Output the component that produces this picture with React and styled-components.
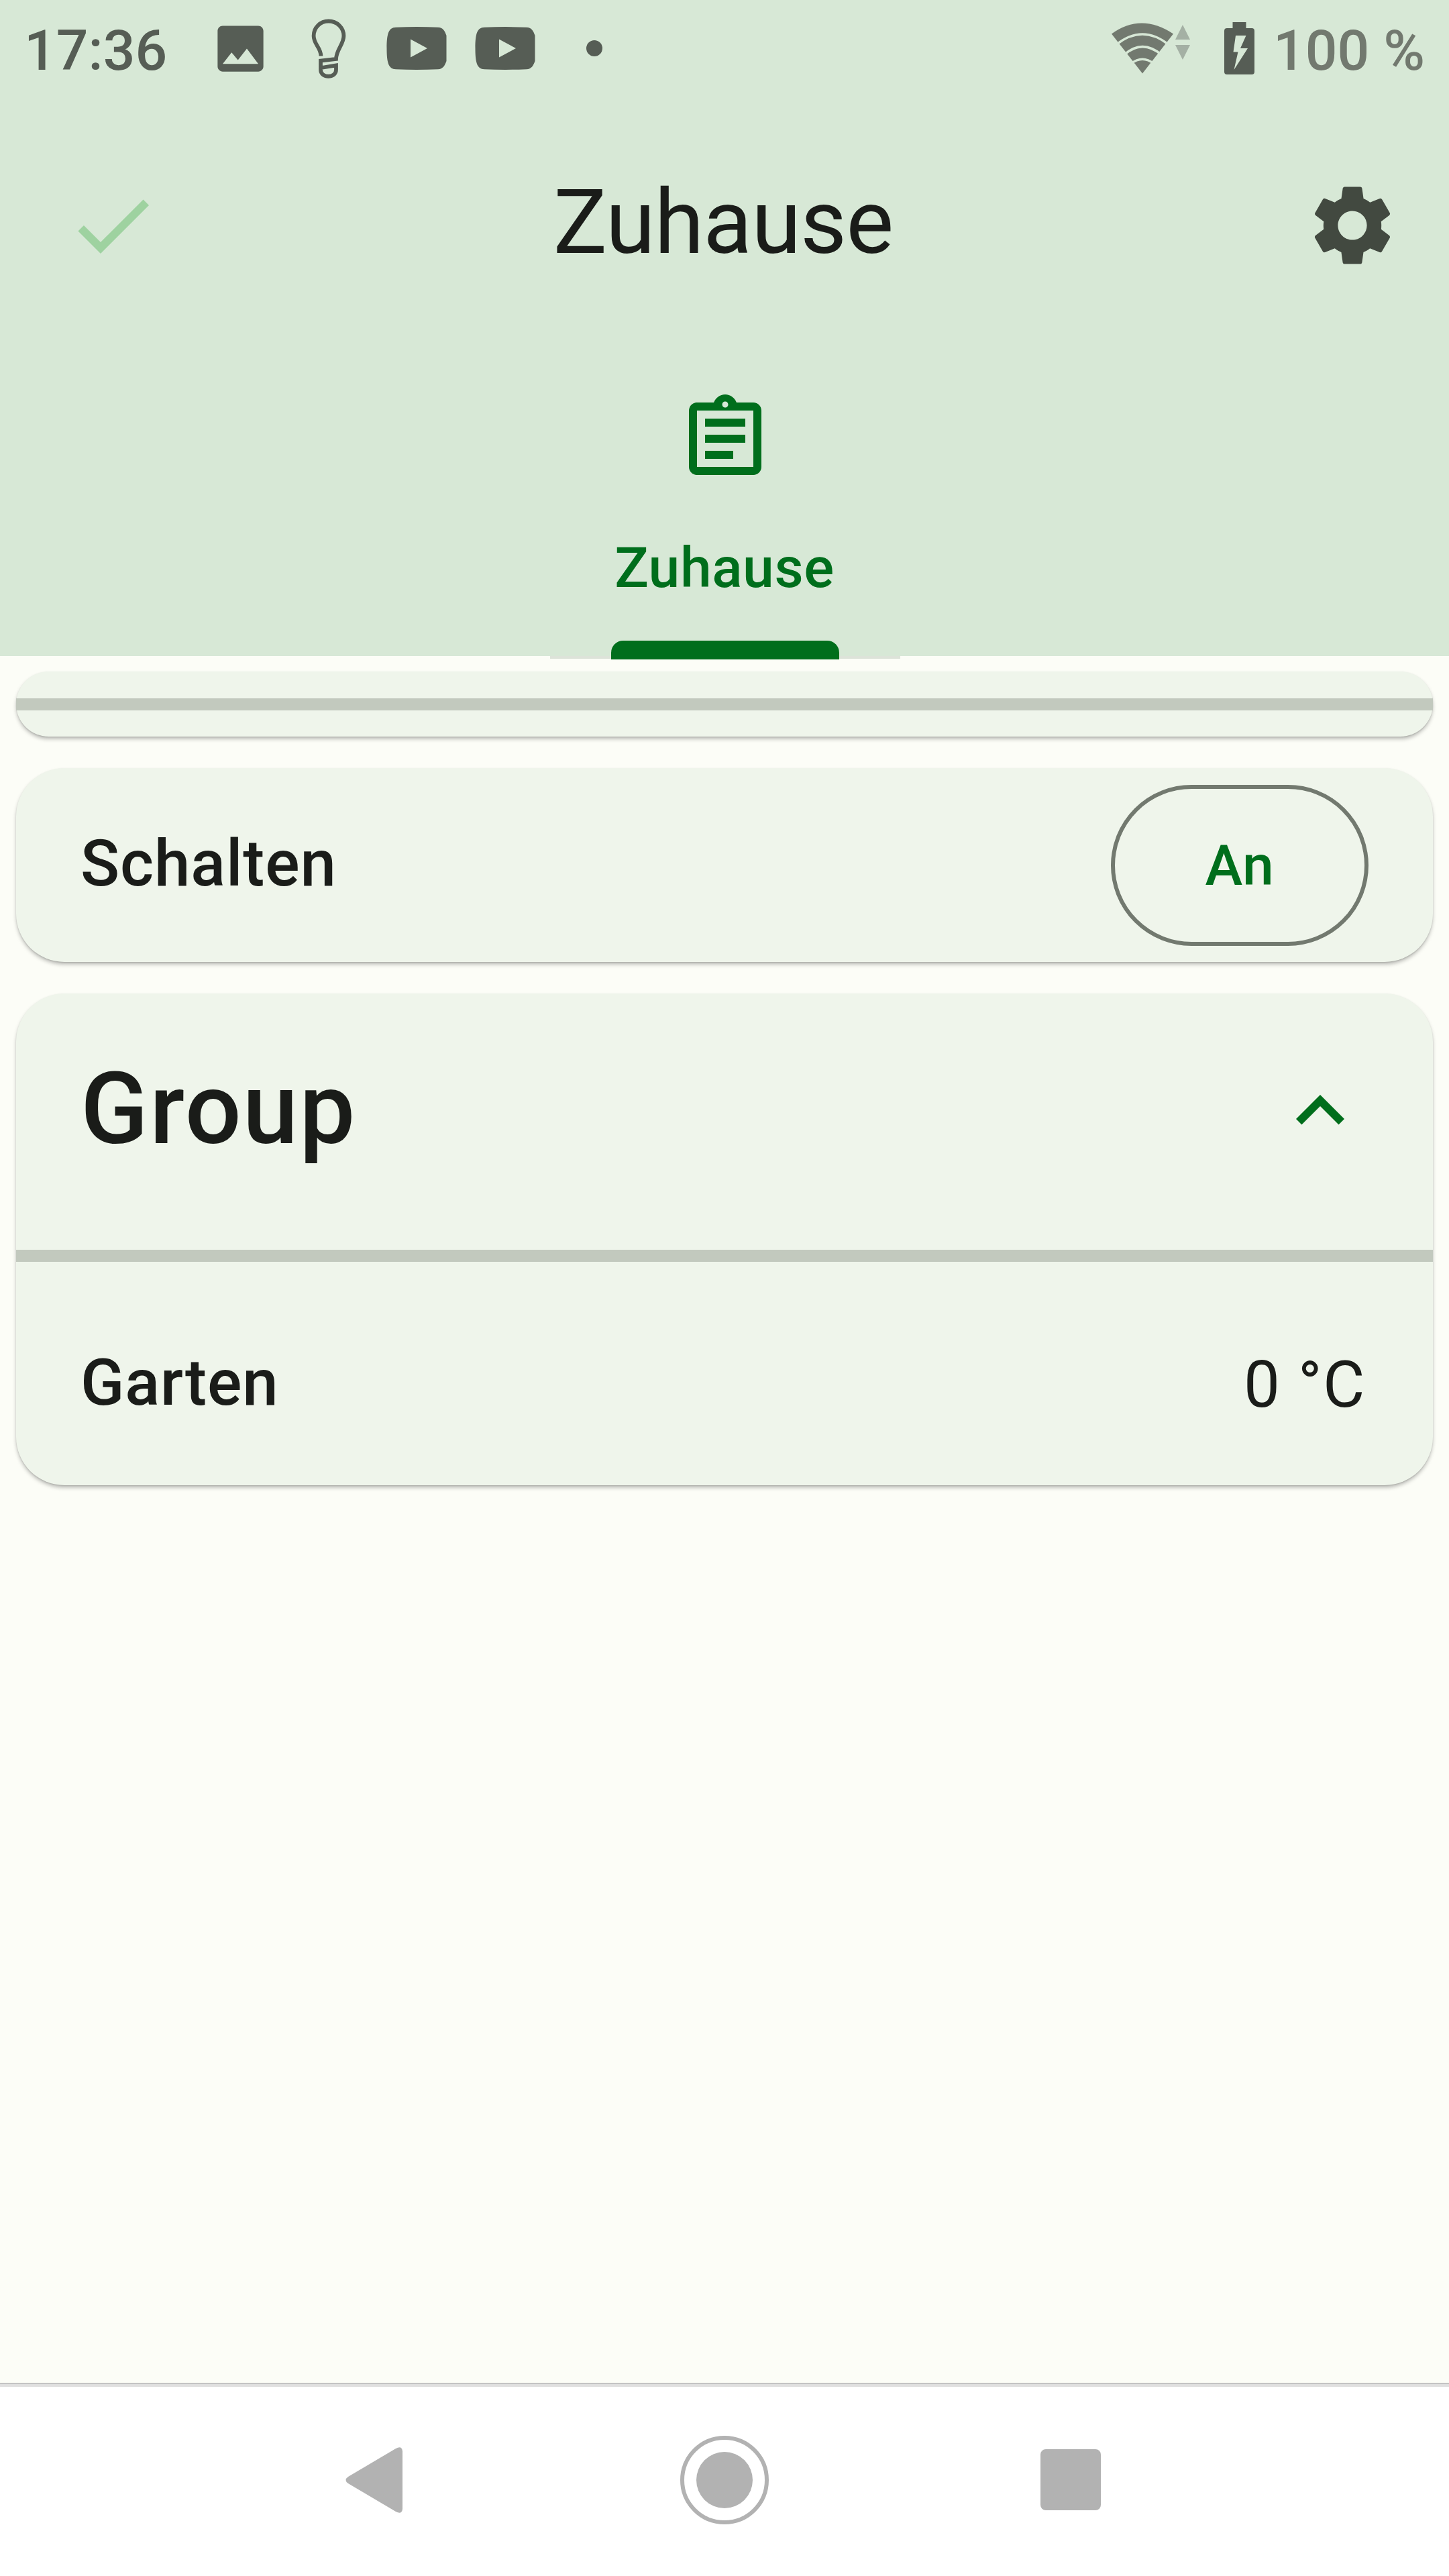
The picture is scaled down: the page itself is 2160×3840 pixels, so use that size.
import React from "react";
import styled, { createGlobalStyle } from "styled-components";
import {
  MdCheck,
  MdSettings,
  MdOutlineAssignment,
  MdExpandLess,
  MdImage,
} from "react-icons/md";

const color = {
  header: "#d7e8d6",
  background: "#fcfdf7",
  card: "#eff5eb",
  divider: "#c2c9be",
  outline: "#72796f",
  text: "#1a1c19",
  muted: "#424940",
  primary: "#006e1c",
  status: "#565d55",
  nav: "#b2b2b2",
};

const GlobalStyle = createGlobalStyle`
  html, body { margin: 0; padding: 0; background: ${color.background}; }
  *, *::before, *::after { box-sizing: border-box; }
  svg { display: block; flex: none; }
`;

const Screen = styled.div`
  display: flex;
  flex-direction: column;
  width: 2160px;
  height: 3840px;
  overflow: hidden;
  background: ${color.background};
  color: ${color.text};
  font-family: Roboto, "Noto Sans", sans-serif;
`;

const Header = styled.header`
  flex: none;
  height: 978px;
  background: ${color.header};
`;

const StatusBar = styled.div`
  display: flex;
  align-items: center;
  justify-content: space-between;
  height: 144px;
  padding: 0 36px;
  color: ${color.status};
`;

const StatusGroup = styled.div`
  display: flex;
  align-items: center;
  height: 144px;
`;

const StatusText = styled.span`
  font-size: 84px;
  font-weight: 500;
  line-height: 100px;
  padding-top: 7px;
  white-space: nowrap;
  width: ${(p) => p.$width}px;
  color: ${(p) => p.$color || color.status};
`;

const StatusSlot = styled.span`
  display: flex;
  align-items: center;
  justify-content: center;
  width: ${(p) => p.$width}px;
  height: 144px;
`;

const BatterySlot = styled.span`
  display: flex;
  padding: 0 28px 0 50px;
`;

const Dot = styled.span`
  width: 24px;
  height: 24px;
  border-radius: 50%;
  background: ${color.status};
`;

const AppBar = styled.div`
  display: grid;
  grid-template-columns: 144px 1fr 144px;
  align-items: center;
  height: 384px;
  padding: 0 72px 0 96px;
`;

const Title = styled.h1`
  margin: 0;
  padding: 0 28px 8px 0;
  text-align: center;
  font-size: 134px;
  font-weight: 400;
  line-height: 160px;
  letter-spacing: -1px;
`;

const TabBar = styled.nav`
  display: flex;
  justify-content: center;
  height: 456px;
  padding-left: 2px;
`;

const Tab = styled.div`
  display: flex;
  flex-direction: column;
  align-items: center;
  width: 522px;
  height: 456px;
  padding-top: 54px;
  color: ${color.primary};
`;

const TabLabel = styled.span`
  margin-top: 71px;
  padding-right: 2px;
  font-size: 84px;
  font-weight: 500;
  line-height: 100px;
  letter-spacing: 0.6px;
`;

const TabIndicator = styled.div`
  display: flex;
  flex: none;
  justify-content: center;
  width: 522px;
  height: 28px;
  margin-top: 58px;
  background: linear-gradient(to bottom, transparent 23px, #dde3d9 23px, #dde3d9 26.5px, transparent 26.5px);

  &::before {
    content: "";
    width: 340px;
    height: 28px;
    border-radius: 18px 18px 0 0;
    background: ${color.primary};
  }
`;

const Content = styled.main`
  display: flex;
  flex: 1;
  flex-direction: column;
  gap: 47px;
  padding: 23px 24px 0;
`;

const Card = styled.section`
  flex: none;
  height: ${(p) => p.$height}px;
  border-radius: ${(p) => p.$radius || 72}px;
  background: ${color.card};
  box-shadow: 0 4px 6px -1px rgba(0, 0, 0, 0.3), 0 1px 2px rgba(0, 0, 0, 0.1);
`;

const Divider = styled.hr`
  flex: none;
  height: 18px;
  margin: 0;
  border: 0;
  background: ${color.divider};
`;

const Collapsed = styled(Card)`
  display: flex;
  flex-direction: column;
  justify-content: center;
`;

const Row = styled.div`
  display: flex;
  align-items: center;
  justify-content: space-between;
  height: ${(p) => p.$height}px;
  padding: ${(p) => p.$top || 0}px 96px 0;
`;

const Label = styled.span`
  font-size: 96px;
  font-weight: 500;
  line-height: 120px;
  letter-spacing: 0.9px;
  padding-bottom: 6px;
`;

const GroupTitle = styled.h2`
  margin: 0;
  padding-bottom: 36px;
  font-size: 148px;
  font-weight: 500;
  line-height: 176px;
  letter-spacing: 2.2px;
`;

const GroupToggle = styled.span`
  display: flex;
  color: ${color.primary};
  padding-bottom: 32px;
`;

const Value = styled.span`
  font-size: 96px;
  line-height: 120px;
  letter-spacing: 1.5px;
  padding-right: 4px;
`;

const PillButton = styled.button`
  width: 384px;
  height: 240px;
  padding: 3px 0 0 0;
  border: 6px solid ${color.outline};
  border-radius: 120px;
  background: transparent;
  color: ${color.primary};
  font: 500 84px/100px Roboto, "Noto Sans", sans-serif;
  letter-spacing: 0.6px;
`;

const NavBar = styled.footer`
  display: flex;
  flex: none;
  align-items: center;
  height: 288px;
  padding-left: 515px;
  background: #fff;
  border-top: 1px solid #a0a0a0;
  box-shadow: inset 0 5px 0 #e0e0e0;
`;

const HomeButton = styled.span`
  display: flex;
  align-items: center;
  justify-content: center;
  width: 132px;
  height: 132px;
  margin-left: 414px;
  border: 6px solid ${color.nav};
  border-radius: 50%;

  &::before {
    content: "";
    width: 84px;
    height: 84px;
    border-radius: 50%;
    background: ${color.nav};
  }
`;

const RecentsButton = styled.span`
  width: 90px;
  height: 91px;
  margin-left: 405px;
  border-radius: 8px;
  background: ${color.nav};
`;

const BulbIcon = () => (
  <svg width="54" height="90" viewBox="463 27 54 90" fill="none" stroke="currentColor" strokeWidth="5.8">
    <path d="M478.4 83.5C478.4 71 467.6 66 467.6 53.5C467.6 41 477.5 31.5 489.8 31.5C502.1 31.5 512.4 41 512.4 53.5C512.4 66 501.2 74 501 88L478 90.5V104C478 117 501 117 501 104V97.5L479 101" />
  </svg>
);

const VideoIcon = () => (
  <svg width="90" height="64" viewBox="0 0 90 64">
    <path
      fill="currentColor"
      fillRule="evenodd"
      d="M14 .8Q45-.6 77 .8C84 1 87 6 89.5 13V51C87 58 84 63 77 63.200Q45 64.600 14 63.200C3 63 .5 53 .5 32S3 1 14 .8ZM36 18.500V45.500L61 32Z"
    />
  </svg>
);

const WifiIcon = () => (
  <svg width="118" height="78" viewBox="1657 32 118 78">
    <path fill={color.outline} d="M1657 49.500Q1701 17.500 1749 49.500L1703 108.500Z" />
    <g fill="none" stroke={color.header} strokeWidth="3.400">
      <path d="M1664 65.500Q1703 34.500 1742 65.500" />
      <path d="M1676 80.500Q1703 56.500 1732 81" />
      <path d="M1686 94Q1703 80.500 1720 94" />
    </g>
    <path fill="#a4b0a4" d="M1763 36L1774 58H1752ZM1752 66H1774L1763 88Z" />
  </svg>
);

const BatteryIcon = () => (
  <svg width="45" height="78" viewBox="0 0 45 78">
    <path
      fill="currentColor"
      fillRule="evenodd"
      d="M12.500 0H32.500V9H41Q45 9 45 13V74Q45 78 41 78H4Q0 78 0 74V13Q0 9 4 9H12.500ZM17 20L13.500 44.500H20.500L14.500 71L35 39H24L32.500 20Z"
    />
  </svg>
);

const BackIcon = () => (
  <svg width="85" height="98" viewBox="0 0 85 98">
    <path fill={color.nav} d="M75 2Q84-3 85 6V92Q84 101 75 96L4 54Q-3 49 4 44Z" />
  </svg>
);

export default function App() {
  return (
    <>
      <GlobalStyle />
      <Screen>
        <Header>
          <StatusBar>
            <StatusGroup>
              <StatusText $width={276}>17:36</StatusText>
              <StatusSlot $width={92}>
                <MdImage size={91} />
              </StatusSlot>
              <StatusSlot $width={172}>
                <BulbIcon />
              </StatusSlot>
              <StatusSlot $width={90}>
                <VideoIcon />
              </StatusSlot>
              <StatusSlot $width={173}>
                <VideoIcon />
              </StatusSlot>
              <StatusSlot $width={94}>
                <Dot />
              </StatusSlot>
            </StatusGroup>
            <StatusGroup>
              <WifiIcon />
              <BatterySlot>
                <BatteryIcon />
              </BatterySlot>
              <StatusText $color={color.outline}>100 %</StatusText>
            </StatusGroup>
          </StatusBar>
          <AppBar>
            <MdCheck size={144} color="#9ed2a0" />
            <Title>Zuhause</Title>
            <MdSettings size={144} color={color.muted} />
          </AppBar>
          <TabBar>
            <Tab>
              <MdOutlineAssignment size={144} />
              <TabLabel>Zuhause</TabLabel>
              <TabIndicator />
            </Tab>
          </TabBar>
        </Header>
        <Content>
          <Collapsed $height={97} $radius={48.5}>
            <Divider />
          </Collapsed>
          <Card $height={289}>
            <Row $height={289}>
              <Label>Schalten</Label>
              <PillButton type="button">An</PillButton>
            </Row>
          </Card>
          <Card $height={733}>
            <Row $height={382}>
              <GroupTitle>Group</GroupTitle>
              <GroupToggle>
                <MdExpandLess size={144} />
              </GroupToggle>
            </Row>
            <Divider />
            <Row $height={333} $top={33}>
              <Label>Garten</Label>
              <Value>0 °C</Value>
            </Row>
          </Card>
        </Content>
        <NavBar>
          <BackIcon />
          <HomeButton />
          <RecentsButton />
        </NavBar>
      </Screen>
    </>
  );
}
